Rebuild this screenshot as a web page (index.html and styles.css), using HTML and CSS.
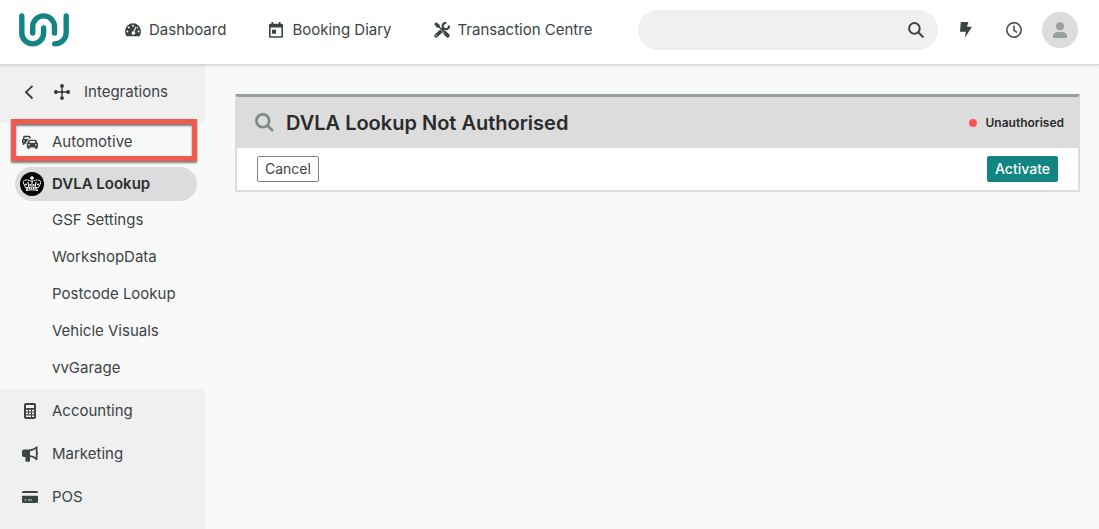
FILE: index.html
```html
<!DOCTYPE html>
<html lang="en">
<head>
<meta charset="utf-8">
<title>DVLA Lookup</title>
<link rel="stylesheet" href="styles.css">
</head>
<body>
<header class="topbar">
  <a class="logo" href="#" aria-label="Home">
    <svg width="50" height="34" viewBox="0 0 50 34" fill="none" stroke="#128583" stroke-width="5.400" stroke-linecap="round">
      <path d="M2.800 2.900V20a10.900 10.900 0 0 0 21.800 0V15"/>
      <path d="M13.700 20V13.800a10.900 10.900 0 0 1 21.800 0V20"/>
      <path d="M47.200 2.900V19.500a11.300 11.300 0 0 1-11.500 11.400"/>
    </svg>
  </a>
  <nav class="mainnav" aria-label="Main">
    <a href="#">
      <svg width="16" height="16" viewBox="0 0 16 16"><path fill="#3b4443" d="M8 1.300a8 8 0 0 0-8 8c0 1.600.4 3.100 1.200 4.400.2.400.5.500.9.500h11.800c.4 0 .7-.1.900-.5A8.300 8.300 0 0 0 16 9.300a8 8 0 0 0-8-8z"/><g fill="#fff"><circle cx="8" cy="3.700" r="1"/><circle cx="3.800" cy="5.500" r="1"/><circle cx="2.300" cy="9.600" r="1"/><circle cx="13.700" cy="9.600" r="1"/><circle cx="12.500" cy="5.700" r=".7"/><path d="M10.600 4.500l.9.500-2 4.700a1.700 1.700 0 1 1-1-.4z"/></g></svg>
      Dashboard</a>
    <a href="#">
      <svg width="16" height="16" viewBox="0 0 16 16"><path fill="#3b4443" fill-rule="evenodd" d="M3.500 0h1.800v1.800h5.400V0h1.800v1.800h1.300c.7 0 1.200.5 1.200 1.200v11.500c0 .8-.5 1.300-1.200 1.300H2.200c-.7 0-1.200-.5-1.200-1.300V3c0-.7.5-1.200 1.200-1.200h1.300zM2.600 5.600v8.600h10.800V5.600zM4 7.800h4v4H4z"/></svg>
      Booking Diary</a>
    <a href="#">
      <svg width="16" height="16" viewBox="0 0 16 16"><g fill="none" stroke="#3b4443" stroke-linecap="round"><path d="M2.200 13.800l6.500-6.200" stroke-width="3.600"/><path d="M15 3.600a3.200 3.200 0 1 1-2.700-2.700" stroke-width="2.200" stroke-linecap="butt"/><path d="M3 3l6 6" stroke-width="1.600"/><path d="M10.700 10.700l3 3" stroke-width="3.900"/></g><path fill="#3b4443" d="M.2 2L2 .2l3.600 2.600.3 2.200-.9.900-2.200-.3z"/><path d="M4.600 5.800l6.200 6.200" stroke="#fff" stroke-width=".6"/><circle cx="2.400" cy="13.500" r=".6" fill="#fff"/></svg>
      Transaction Centre</a>
  </nav>
  <form class="search">
    <input type="search" aria-label="Search">
    <button type="submit" aria-label="Search"><svg width="16" height="16" viewBox="0 0 16 16" fill="none" stroke="#3b4443" stroke-width="2"><circle cx="6.400" cy="6.400" r="5.300"/><path d="M10.200 10.200l5.200 5.200"/></svg></button>
  </form>
  <div class="tools">
    <button aria-label="Quick actions"><svg width="16" height="16" viewBox="0 0 16 16"><path fill="#3b4443" d="M2.800 0h7.600L9 4.800h5L6.700 16l1.200-6.300H2z"/></svg></button>
    <button aria-label="History"><svg width="16" height="16" viewBox="0 0 16 16" fill="none" stroke="#3b4443" stroke-width="1.500"><circle cx="8" cy="8" r="7.200"/><path d="M8 3.500v4.800l3 2"/></svg></button>
    <button class="avatar" aria-label="Account"><svg width="16" height="16" viewBox="0 0 16 16" fill="#98a19d"><circle cx="8" cy="4.200" r="4"/><path d="M1 16v-1.500C1 11.700 3.200 10 6 10h4c2.800 0 5 1.700 5 4.500V16z"/></svg></button>
  </div>
</header>
<div class="layout">
  <aside class="sidebar">
    <a class="side-title" href="#">
      <svg width="16" height="16" viewBox="0 0 16 16" fill="none" stroke="#2f3736" stroke-width="1.800"><path d="M10.500 1.800L4 8.200l6.500 6.300"/></svg>
      <svg width="16" height="16" viewBox="0 0 16 16"><path d="M8 2v12M2 8h12" stroke="#2f3736" stroke-width="1.300"/><g fill="#2f3736"><circle cx="8" cy="1.900" r="1.900"/><circle cx="8" cy="14.100" r="1.900"/><circle cx="1.900" cy="8" r="1.900"/><circle cx="14.100" cy="8" r="1.900"/><circle cx="8" cy="8" r="1.300"/></g></svg>
      <span>Integrations</span>
    </a>
    <div class="group">
      <a class="row row-marked" href="#">
        <svg width="16" height="16" viewBox="0 0 16 16"><path fill="#3b4443" fill-rule="evenodd" d="M2 1.800h5.200c.7 0 1 .3 1.200.8l.5 1.500-2.600.7-1 2.500-1.100 1v1.500H2.300V11H.8V9.600L0 9V5.800l.8-.7.6-2.500zM2.700 3.200l-.5 1.700h4l1-1.700zM1.200 6.400v1h1.400v-1z"/><path fill="#3b4443" fill-rule="evenodd" d="M7.500 5.700h5.800c.6 0 .9.300 1.100.8l.7 2 .9.800v4.100h-.8v1.500h-1.900v-1.500H7.500v1.500H5.600v-1.500h-.8V9.300l.9-.8.700-2c.2-.5.5-.8 1.100-.8zM8 7l-.6 1.700h6L12.800 7zM6.200 10.200v1.200h1.600v-1.200zm6.800 0v1.200h1.600v-1.200z"/></svg>
        Automotive</a>
      <a class="pill" href="#" aria-current="page">
        <svg width="24" height="24" viewBox="0 0 24 24"><circle cx="12" cy="12" r="12" fill="#000"/><path fill="#fff" d="M11.300 4h1.400v1.300H14v1.400h-1.300v1.600h-1.400V6.700H10V5.300h1.300z"/><g fill="none" stroke="#fff" stroke-width="1.100"><path d="M5.600 15.800L3.400 11c-.4-1.800 1-3 2.800-3 2.600 0 4 .8 5.800 1.300 1.800-.5 3.200-1.300 5.800-1.300 1.800 0 3.200 1.200 2.800 3l-2.200 4.800" stroke-dasharray="1.700 .5"/><path d="M12 9v5.500M8 9.800l.8 5M16 9.800l-.8 5"/><path d="M5.800 15.900c4-1 8.400-1 12.400 0M6 18.600c4-1 8-1 12 0" stroke-width="1"/><path d="M6.200 17.200c4-1 7.600-1 11.600 0" stroke-width="1.600" stroke-dasharray="1.500 .8"/></g><g fill="#fff"><circle cx="6" cy="12.500" r="1"/><circle cx="10.200" cy="13" r=".9"/><circle cx="13.800" cy="13" r=".9"/><circle cx="18" cy="12.500" r="1"/></g></svg>
        DVLA Lookup</a>
      <a class="sub" href="#">GSF Settings</a>
      <a class="sub" href="#">WorkshopData</a>
      <a class="sub" href="#">Postcode Lookup</a>
      <a class="sub" href="#">Vehicle Visuals</a>
      <a class="sub" href="#">vvGarage</a>
    </div>
    <a class="row" href="#">
      <svg width="16" height="16" viewBox="0 0 16 16"><rect x="2" width="12" height="16" rx="2" fill="#3b4443"/><g fill="#f0f0f0"><path d="M4 2h8v3H4z"/><path d="M4 6.700h2v1.700H4zM7 6.700h2v1.700H7zM10 6.700h2v1.700h-2zM4 9.500h2v1.700H4zM7 9.500h2v1.700H7zM10 9.500h2v1.700h-2zM4 12.400h5V14H4zM10 12.400h2V14h-2z"/></g></svg>
      Accounting</a>
    <a class="row" href="#">
      <svg width="16" height="16" viewBox="0 0 16 16"><path fill="#3b4443" fill-rule="evenodd" d="M14 .8c0-.5.700-.8 1.200-.4.200.2.300.4.300.7v4.700c.7.600.7 2.200 0 2.800v4.700c0 .8-1 1.100-1.500.6-1.900-1.800-4.200-2.700-6-2.900v3.600c0 .8-.4 1.200-1.100 1.200H4.600c-.7 0-1.200-.4-1.200-1.200V11H2c-1.200 0-2-.8-2-2V5.400c0-1.200.8-2 2-2h4.700c2.500 0 5.200-.7 7.300-2.600zM13.800 3C12 4.300 10 5 8 5.200v4c2 .2 4 .9 5.800 2.200z"/></svg>
      Marketing</a>
    <a class="row" href="#">
      <svg width="16" height="16" viewBox="0 0 16 16"><path fill="#3b4443" d="M1.500 2h13A1.500 1.500 0 0 1 16 3.500V4H0v-.5A1.500 1.500 0 0 1 1.500 2zM0 6.700h16v5.800a1.500 1.500 0 0 1-1.500 1.500h-13A1.500 1.500 0 0 1 0 12.500z"/><path d="M2.500 11h2M6 11h4" stroke="#c9cccb" stroke-width="1.200"/></svg>
      POS</a>
  </aside>
  <main class="content">
    <section class="card">
      <div class="card-head">
        <svg width="19" height="19" viewBox="0 0 19 19" fill="none" stroke="#7b8a86" stroke-width="2.600"><circle cx="7.800" cy="7.800" r="6.400"/><path d="M12.300 12.300l5.700 5.700"/></svg>
        <h1>DVLA Lookup Not Authorised</h1>
        <span class="status">Unauthorised</span>
      </div>
      <div class="card-body">
        <button class="btn">Cancel</button>
        <button class="btn btn-primary">Activate</button>
      </div>
    </section>
  </main>
</div>
</body>
</html>
```
FILE: styles.css
```css
* {
  box-sizing: border-box;
}

body {
  margin: 0;
  min-height: 100vh;
  display: flex;
  flex-direction: column;
  background: #f9f9f9;
  color: #3b4443;
  font: 15px/20px Inter, "Liberation Sans", sans-serif;
}

a {
  color: inherit;
  text-decoration: none;
}

svg {
  display: block;
  flex: none;
}

button {
  padding: 0;
  border: 0;
  background: none;
  font: inherit;
  color: inherit;
  cursor: pointer;
}

.topbar {
  position: relative;
  display: flex;
  align-items: center;
  height: 65px;
  padding: 0 21px 5px 19px;
  background: #fff;
  border-bottom: 1px solid #d6d6d6;
  box-shadow: 0 1px 3px rgba(0, 0, 0, 0.12);
}

.mainnav {
  display: flex;
  gap: 42px;
  margin-left: 56px;
}

.mainnav a {
  display: flex;
  align-items: center;
  gap: 8px;
  white-space: nowrap;
}

.search {
  display: flex;
  align-items: center;
  width: 300px;
  height: 40px;
  margin-left: auto;
  padding: 0 14px 0 20px;
  border-radius: 20px;
  background: #f0f0f0;
}

.search input {
  flex: 1;
  min-width: 0;
  border: 0;
  outline: 0;
  background: transparent;
  font: inherit;
}

.tools {
  display: flex;
  align-items: center;
  margin-left: 20px;
  gap: 32px;
}

.tools .avatar {
  display: grid;
  place-items: center;
  width: 36px;
  height: 36px;
  margin-left: -12px;
  border-radius: 50%;
  background: #dcdcdc;
}

.layout {
  flex: 1;
  display: flex;
}

.sidebar {
  width: 205px;
  flex: none;
  background: #f0f0f0;
}

.side-title {
  display: flex;
  align-items: center;
  height: 58px;
  padding: 0 22px 5px;
  gap: 16px;
}

.side-title span {
  margin-left: -2px;
}

.group {
  padding-bottom: 3px;
  background: #f9f9f9;
}

.row {
  display: flex;
  align-items: center;
  gap: 14px;
  height: 43px;
  padding-left: 22px;
}

.row-marked {
  position: relative;
  height: 38px;
}

.row-marked::after {
  content: "";
  position: absolute;
  inset: -4px 8px 0 11px;
  border: 5px solid #f15b4f;
  box-shadow: 0 2px 2px rgba(0, 0, 0, 0.5), inset 0 2px 2px rgba(0, 0, 0, 0.5);
}

.pill {
  display: flex;
  align-items: center;
  gap: 8px;
  height: 34px;
  margin: 6px 8px 0 15px;
  padding-left: 5px;
  border-radius: 17px;
  background: #dcdcdc;
  color: #2b2f2e;
  font-weight: 600;
}

.sub {
  display: block;
  padding: 9px 0 8px 52px;
}

.content {
  flex: 1;
  padding: 29px 19px 29px 30px;
}

.card {
  border: 2px solid #dcdcdc;
  border-top: 3px solid #98a19d;
  background: #fff;
}

.card-head {
  display: flex;
  align-items: center;
  gap: 12px;
  height: 51px;
  padding: 0 14px 0 18px;
  background: #dcdcdc;
  color: #2b2b2b;
}

.card-head h1 {
  margin: 0;
  font-size: 20px;
  line-height: 24px;
  font-weight: 600;
}

.status {
  display: flex;
  align-items: center;
  gap: 8px;
  margin-left: auto;
  font-size: 12px;
  font-weight: 600;
}

.status::before {
  content: "";
  width: 8px;
  height: 8px;
  border-radius: 50%;
  background: #ff5257;
}

.card-body {
  display: flex;
  justify-content: space-between;
  padding: 8px 20px;
}

.btn {
  height: 26px;
  padding: 0 7px;
  border: 1px solid #7d8583;
  border-radius: 2px;
  background: #fff;
  font-size: 14px;
}

.btn-primary {
  border-color: #128583;
  background: #128583;
  color: #fff;
  font-weight: 500;
}
```
